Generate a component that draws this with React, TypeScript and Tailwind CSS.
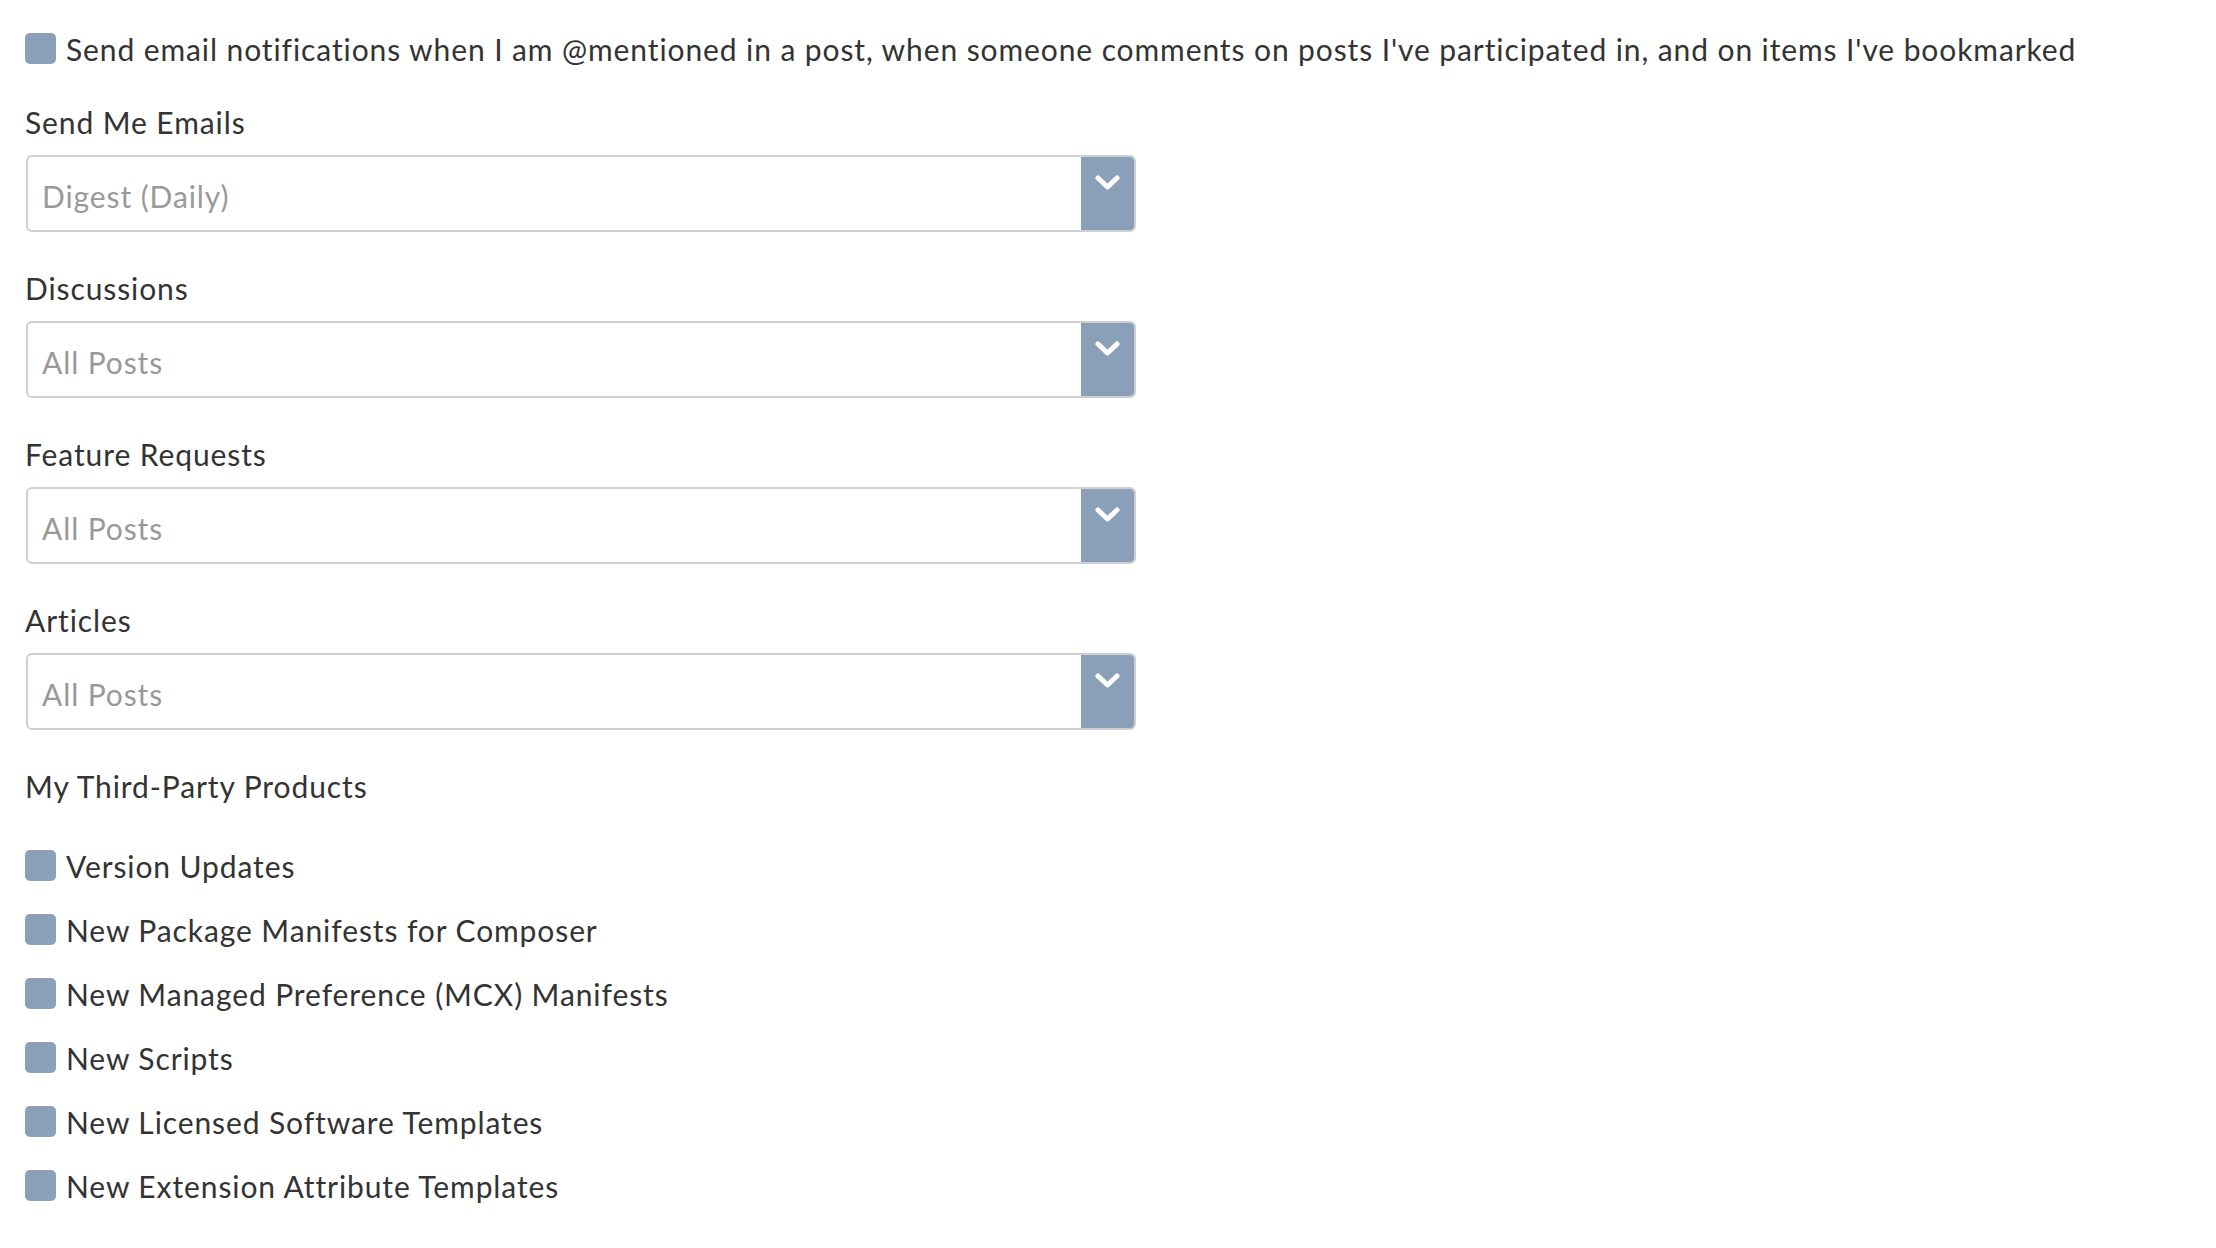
import { useState } from 'react';

const font = { fontFamily: 'Lato, "Open Sans", sans-serif' };

const sections = [
  { label: 'Send Me Emails', value: 'Digest (Daily)' },
  { label: 'Discussions', value: 'All Posts' },
  { label: 'Feature Requests', value: 'All Posts' },
  { label: 'Articles', value: 'All Posts' },
];

const products = [
  'Version Updates',
  'New Package Manifests for Composer',
  'New Managed Preference (MCX) Manifests',
  'New Scripts',
  'New Licensed Software Templates',
  'New Extension Attribute Templates',
];

function Box({ checked, onClick }: { checked: boolean; onClick: () => void }) {
  return (
    <span
      onClick={onClick}
      className="w-[31px] h-[31px] rounded-[5px] bg-[#8aa0b9] shrink-0 flex items-center justify-center cursor-pointer"
    >
      {checked && (
        <svg width="18" height="14" viewBox="0 0 18 14">
          <polyline points="2,7 7,12 16,2" fill="none" stroke="white" strokeWidth="3" />
        </svg>
      )}
    </span>
  );
}

function CheckRow({ text }: { text: string }) {
  const [on, setOn] = useState(false);
  return (
    <div className="flex items-center gap-[10px] h-[31px]">
      <Box checked={on} onClick={() => setOn(!on)} />
      <span className="text-[30px] leading-[36px] tracking-[0.9px] text-[#333] whitespace-nowrap">{text}</span>
    </div>
  );
}

function Dropdown({ value }: { value: string }) {
  return (
    <div className="ml-px w-[1110px] h-[77px] flex border-2 border-[#cfcfcf] rounded-[6px] overflow-hidden bg-white">
      <div className="flex-1 flex items-center pl-[14px] pt-[5px] text-[30px] tracking-[0.9px] text-[#999]">{value}</div>
      <div className="w-[53px] bg-[#8aa0b9] flex justify-center pt-[18px]">
        <svg width="25" height="16" viewBox="0 0 25 16">
          <polyline points="3,3 12.5,12 22,3" fill="none" stroke="white" strokeWidth="5" strokeLinecap="round" strokeLinejoin="round" />
        </svg>
      </div>
    </div>
  );
}

export default function App() {
  return (
    <div className="min-h-screen bg-white pl-[25px] pt-[33px]" style={font}>
      <CheckRow text="Send email notifications when I am @mentioned in a post, when someone comments on posts I've participated in, and on items I've bookmarked" />

      <div className="mt-[40px] flex flex-col gap-[38px]">
        {sections.map((s) => (
          <div key={s.label}>
            <div className="text-[30px] leading-[36px] tracking-[0.9px] text-[#333] mb-[15px]">{s.label}</div>
            <Dropdown value={s.value} />
          </div>
        ))}
      </div>

      <div className="mt-[38px] text-[30px] leading-[36px] tracking-[0.9px] text-[#333]">My Third-Party Products</div>

      <div className="mt-[46px] flex flex-col gap-[33px]">
        {products.map((p) => (
          <CheckRow key={p} text={p} />
        ))}
      </div>
    </div>
  );
}
